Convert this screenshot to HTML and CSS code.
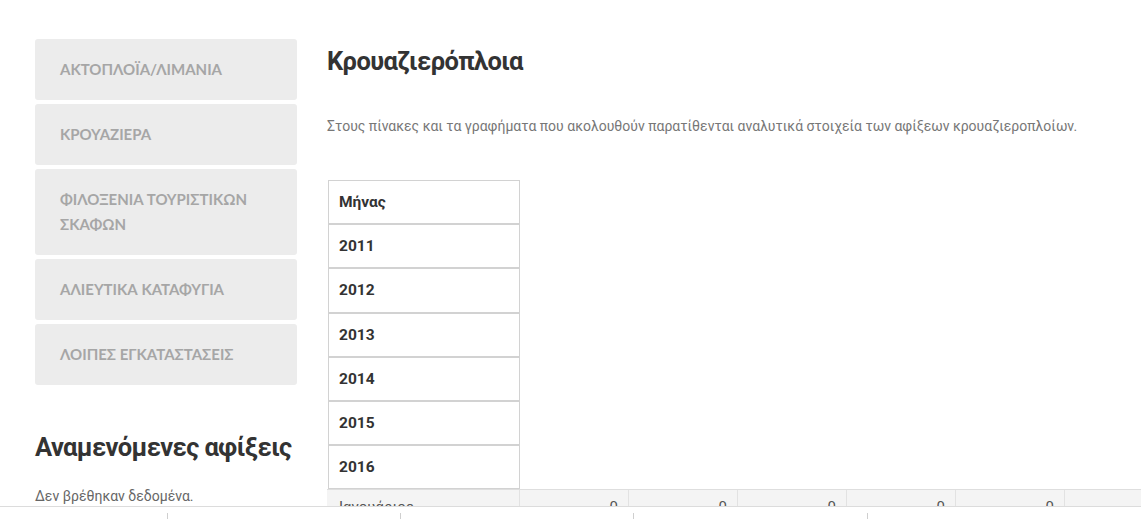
FILE: index.html
```html
<!DOCTYPE html>
<html lang="el">
<head>
<meta charset="utf-8">
<title>Κρουαζιερόπλοια</title>
<link rel="stylesheet" href="styles.css">
</head>
<body>
<div class="page">
  <aside class="sidebar">
    <nav class="menu">
      <a class="menu-item" href="#">ΑΚΤΟΠΛΟΪΑ/ΛΙΜΑΝΙΑ</a>
      <a class="menu-item" href="#">ΚΡΟΥΑΖΙΕΡΑ</a>
      <a class="menu-item" href="#">ΦΙΛΟΞΕΝΙΑ ΤΟΥΡΙΣΤΙΚΩΝ ΣΚΑΦΩΝ</a>
      <a class="menu-item" href="#">ΑΛΙΕΥΤΙΚΑ ΚΑΤΑΦΥΓΙΑ</a>
      <a class="menu-item" href="#">ΛΟΙΠΕΣ ΕΓΚΑΤΑΣΤΑΣΕΙΣ</a>
    </nav>
    <h2 class="side-title">Αναμενόμενες αφίξεις</h2>
    <p class="side-text">Δεν βρέθηκαν δεδομένα.</p>
  </aside>
  <main class="main">
    <h1 class="title">Κρουαζιερόπλοια</h1>
    <p class="intro">Στους πίνακες και τα γραφήματα που ακολουθούν παρατίθενται αναλυτικά στοιχεία των αφίξεων κρουαζιεροπλοίων.</p>
    <div class="years">
      <div class="year-cell">Μήνας</div>
      <div class="year-cell">2011</div>
      <div class="year-cell">2012</div>
      <div class="year-cell">2013</div>
      <div class="year-cell">2014</div>
      <div class="year-cell">2015</div>
      <div class="year-cell">2016</div>
    </div>
    <div class="data-row">
      <div class="data-label">Ιανουάριος</div>
      <div class="data-cell">0</div>
      <div class="data-cell">0</div>
      <div class="data-cell">0</div>
      <div class="data-cell">0</div>
      <div class="data-cell">0</div>
      <div class="data-cell">0</div>
    </div>
  </main>
</div>
<div class="bottom-bar">
  <div class="bar-col"></div>
  <div class="bar-col"></div>
  <div class="bar-col"></div>
  <div class="bar-col"></div>
  <div class="bar-col"></div>
</div>
</body>
</html>
```
FILE: styles.css
```css
html, body {
  margin: 0;
  padding: 0;
  background: #fff;
  overflow: hidden;
}
body {
  font-family: Roboto, "Noto Sans", sans-serif;
  color: #333;
  width: 1141px;
  height: 519px;
}
.page {
  display: flex;
  padding: 39px 0 0 35px;
  gap: 30px;
}
.sidebar {
  width: 262px;
  flex: none;
}
.menu {
  display: flex;
  flex-direction: column;
  gap: 4px;
}
.menu-item {
  display: block;
  background: #ececec;
  border-radius: 3px;
  padding: 18px 25px;
  line-height: 25px;
  font-family: Lato, "Open Sans", sans-serif;
  font-weight: 700;
  font-size: 15px;
  color: #a6a6a6;
  text-decoration: none;
}
.side-title {
  margin: 46px 0 0;
  font-family: Roboto, sans-serif;
  font-weight: 700;
  font-size: 25.5px;
  line-height: 32px;
  color: #333;
  letter-spacing: -0.6px;
  white-space: nowrap;
}
.side-text {
  margin: 23px 0 0;
  font-size: 14px;
  line-height: 20px;
  color: #666;
}
.main {
  flex: 1;
  min-width: 0;
}
.title {
  margin: 6px 0 0;
  font-family: Roboto, sans-serif;
  font-weight: 700;
  font-size: 25.5px;
  line-height: 32px;
  color: #333;
  letter-spacing: -0.6px;
}
.intro {
  margin: 39px 0 0;
  font-size: 14px;
  line-height: 20px;
  color: #777;
  white-space: nowrap;
}
.years {
  margin-top: 44px;
  margin-left: 1px;
  width: 192px;
  display: flex;
  flex-direction: column;
}
.year-cell {
  box-sizing: border-box;
  height: 44.2px;
  border: 1px solid #d2d2d2;
  padding: 0 10px;
  display: flex;
  align-items: center;
  font-weight: 700;
  font-size: 15.5px;
  color: #333;
}
.data-row {
  display: flex;
  background: #f4f4f4;
  border-top: 1px solid #dedede;
  height: 40px;
  width: 900px;
}
.data-label {
  box-sizing: border-box;
  width: 193px;
  flex: none;
  padding: 8px 12px;
  font-size: 15px;
  color: #555;
  border-right: 1px solid #e2e2e2;
}
.data-cell {
  box-sizing: border-box;
  width: 109px;
  flex: none;
  padding: 8px 10px;
  text-align: right;
  font-size: 15px;
  color: #555;
  border-right: 1px solid #e2e2e2;
}
.bottom-bar {
  position: fixed;
  left: 0;
  right: 0;
  bottom: 0;
  height: 6px;
  background: #fff;
  border-top: 1px solid #dcdcdc;
  display: grid;
  grid-template-columns: 167px 233px 233px 234px 1fr;
  padding-top: 6px;
  box-sizing: content-box;
}
.bar-col + .bar-col {
  border-left: 1px solid #cfcfcf;
}
```
